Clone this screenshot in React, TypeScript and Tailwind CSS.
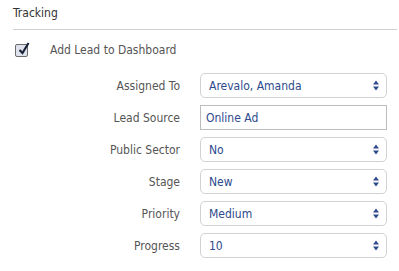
import React from 'react';

const font = { fontFamily: '"DejaVu Sans Condensed", "DejaVu Sans", sans-serif' };

const Arrows: React.FC = () => (
  <svg width="6" height="11" viewBox="0 0 6 11" className="shrink-0">
    <path d="M3 0.5 L6 4.5 L0 4.5 Z" fill="#2c4a8c" />
    <path d="M3 10.5 L6 6.5 L0 6.5 Z" fill="#2c4a8c" />
  </svg>
);

const fields = [
  { label: 'Assigned To', value: 'Arevalo, Amanda', select: true },
  { label: 'Lead Source', value: 'Online Ad', select: false },
  { label: 'Public Sector', value: 'No', select: true },
  { label: 'Stage', value: 'New', select: true },
  { label: 'Priority', value: 'Medium', select: true },
  { label: 'Progress', value: '10', select: true },
];

const App: React.FC = () => {
  return (
    <div className="w-[399px] h-[271px] bg-white overflow-hidden text-[12px] leading-[18px]" style={font}>
      <div className="pl-[13px] pt-[4px] text-[#333]">Tracking</div>
      <div className="ml-[13px] mr-[2px] mt-[7px] border-t border-[#d0d0d0]" />

      <div className="flex items-center mt-[11px] h-[18px] pl-[15px]">
        <div className="relative w-[13px] h-[13px] border border-[#6b6b6b] rounded-[2px] bg-[#dfe3ee]">
          <svg width="14" height="15" viewBox="0 0 14 15" className="absolute left-[1px] top-[-4px]">
            <path d="M2.5 9 L5.5 12 L11.5 2" stroke="#1b2438" strokeWidth="2.2" fill="none" />
          </svg>
        </div>
        <span className="ml-[22px] text-[#555]">Add Lead to Dashboard</span>
      </div>

      <div className="mt-[14px] flex flex-col gap-[7px]">
        {fields.map((f, i) => (
          <div key={i} className="flex items-center h-[25px]">
            <div className="w-[180px] text-right text-[#555]">{f.label}</div>
            <div
              className={
                'ml-[20px] w-[187px] h-[25px] flex items-center justify-between pr-[7px] border text-[#2c4a8c] bg-white ' +
                (f.select ? 'rounded-[5px] border-[#d2d2d2] pl-[8px]' : 'rounded-none border-[#bdbdbd] pl-[5px]')
              }
            >
              <span>{f.value}</span>
              {f.select && <Arrows />}
            </div>
          </div>
        ))}
      </div>
    </div>
  );
};

export default App;
